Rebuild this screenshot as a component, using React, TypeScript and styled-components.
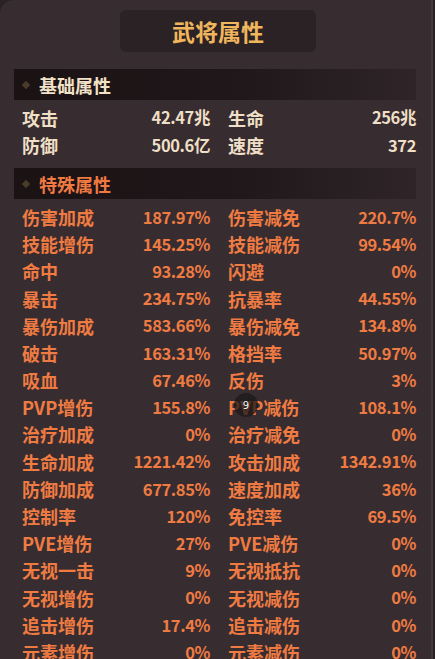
import styled, { createGlobalStyle } from 'styled-components';

const GlobalStyle = createGlobalStyle`
    html, body {
        margin: 0;
        padding: 0;
        background: #2a2124;
        overflow: hidden;
    }
    body {
        font-family: "Noto Sans CJK SC", "Noto Sans", sans-serif;
    }
`;

type Stat = [string, string];

const basicStats: [Stat, Stat][] = [
    [['攻击', '42.47兆'], ['生命', '256兆']],
    [['防御', '500.6亿'], ['速度', '372']],
];

const specialStats: [Stat, Stat][] = [
    [['伤害加成', '187.97%'], ['伤害减免', '220.7%']],
    [['技能增伤', '145.25%'], ['技能减伤', '99.54%']],
    [['命中', '93.28%'], ['闪避', '0%']],
    [['暴击', '234.75%'], ['抗暴率', '44.55%']],
    [['暴伤加成', '583.66%'], ['暴伤减免', '134.8%']],
    [['破击', '163.31%'], ['格挡率', '50.97%']],
    [['吸血', '67.46%'], ['反伤', '3%']],
    [['PVP增伤', '155.8%'], ['PVP减伤', '108.1%']],
    [['治疗加成', '0%'], ['治疗减免', '0%']],
    [['生命加成', '1221.42%'], ['攻击加成', '1342.91%']],
    [['防御加成', '677.85%'], ['速度加成', '36%']],
    [['控制率', '120%'], ['免控率', '69.5%']],
    [['PVE增伤', '27%'], ['PVE减伤', '0%']],
    [['无视一击', '9%'], ['无视抵抗', '0%']],
    [['无视增伤', '0%'], ['无视减伤', '0%']],
    [['追击增伤', '17.4%'], ['追击减伤', '0%']],
    [['元素增伤', '0%'], ['元素减伤', '0%']],
];

const Panel = styled.div`
    position: relative;
    width: 433px;
    height: 659px;
    background: #372d30;
    border-right: 2px solid #433a3c;
    border-top-left-radius: 14px;
    overflow: hidden;
    padding-top: 10px;
    box-sizing: border-box;
`;

const TitleBox = styled.div`
    width: 196px;
    height: 42px;
    margin: 0 0 0 120px;
    background: #2a2224;
    border-radius: 6px;
    display: flex;
    align-items: center;
    justify-content: center;
    color: #f0b65e;
    font-size: 23px;
    font-weight: 700;
`;

const SectionHeader = styled.div<{ $color: string; $first?: boolean }>`
    display: flex;
    align-items: center;
    gap: 10px;
    height: 31px;
    margin: ${({ $first }) => ($first ? '17px' : '10px')} 15px 0 14px;
    padding-left: 9px;
    background: linear-gradient(90deg, #1b1214 0%, #20171a 55%, #2f2528 100%);
    color: ${({ $color }) => $color};
    font-size: 18px;
    font-weight: 700;
`;

const Diamond = styled.span`
    width: 6px;
    height: 6px;
    background: #4b3b2a;
    transform: rotate(45deg);
    flex-shrink: 0;
`;

const Rows = styled.div`
    padding: 4px 19px 0 22px;
`;

const Row = styled.div`
    display: grid;
    grid-template-columns: 188px 188px;
    column-gap: 18px;
    height: 27.2px;
    align-items: center;
`;

const Cell = styled.div<{ $color: string }>`
    display: flex;
    justify-content: space-between;
    align-items: center;
    color: ${({ $color }) => $color};
    font-weight: 700;
    line-height: 1;
    white-space: nowrap;
`;

const Label = styled.span`
    font-size: 18px;
`;

const Value = styled.span`
    font-size: 16.5px;
    letter-spacing: -0.4px;
`;

const Badge = styled.div`
    position: absolute;
    left: 234px;
    top: 393px;
    width: 24px;
    height: 24px;
    border-radius: 50%;
    background: rgba(28, 24, 26, 0.75);
    color: #f4f4f4;
    font-family: "DejaVu Sans", sans-serif;
    font-size: 10px;
    display: flex;
    align-items: center;
    justify-content: center;
`;

function StatRows({ rows, color }: { rows: [Stat, Stat][]; color: string }) {
    return (
        <Rows>
            {rows.map((pair, i) => (
                <Row key={i}>
                    {pair.map(([label, value]) => (
                        <Cell key={label} $color={color}>
                            <Label>{label}</Label>
                            <Value>{value}</Value>
                        </Cell>
                    ))}
                </Row>
            ))}
        </Rows>
    );
}

export default function App() {
    return (
        <>
            <GlobalStyle />
            <Panel>
                <TitleBox>武将属性</TitleBox>
                <SectionHeader $color="#f2e2c8" $first>
                    <Diamond />
                    基础属性
                </SectionHeader>
                <StatRows rows={basicStats} color="#efdfc6" />
                <SectionHeader $color="#f07a42">
                    <Diamond />
                    特殊属性
                </SectionHeader>
                <StatRows rows={specialStats} color="#ef7b43" />
                <Badge>9</Badge>
            </Panel>
        </>
    );
}
